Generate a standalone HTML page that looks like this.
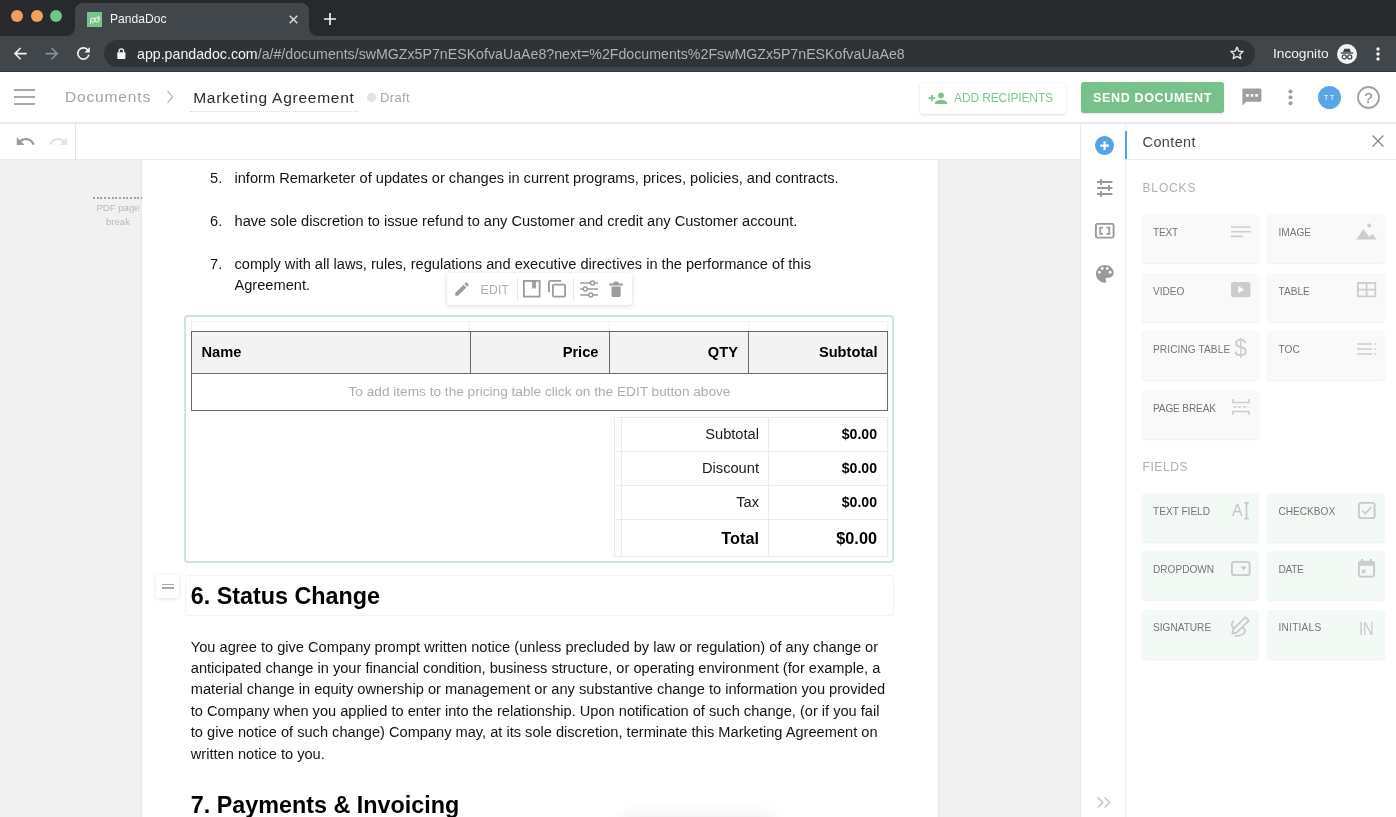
<!DOCTYPE html>
<html>
<head>
<meta charset="utf-8">
<title>PandaDoc</title>
<style>
*{box-sizing:border-box;margin:0;padding:0}
html,body{width:1396px;height:817px;overflow:hidden;background:#fff;font-family:"Liberation Sans",sans-serif;}
#root{position:relative;width:1396px;height:817px;overflow:hidden;background:transparent;will-change:transform;transform:translateZ(0)}
.abs{position:absolute}
svg{display:block;position:absolute;overflow:visible}
.t{position:absolute;white-space:nowrap;line-height:1}
/* ---------- browser chrome ---------- */
#tabstrip{left:0;top:0;width:1396px;height:36px;background:#28292d}
#tab{left:75px;top:3px;width:234px;height:33px;background:#40464a;border-radius:8px 8px 0 0}
#tab:before,#tab:after{content:"";position:absolute;bottom:0;width:8px;height:8px;background:radial-gradient(circle at 0 0,rgba(0,0,0,0) 7.5px,#40464a 8px)}
#tab:before{left:-8px}
#tab:after{right:-8px;transform:scaleX(-1)}
#toolbar{left:0;top:36px;width:1396px;height:36px;background:#40464a}
#toolbarline{left:0;top:70.5px;width:1396px;height:1.5px;background:#33373a}
#omni{left:104px;top:40px;width:1151px;height:27px;border-radius:14px;background:#2f3336}
.tl{width:12px;height:12px;border-radius:50%;top:10px}
/* ---------- app header ---------- */
#apphead{left:0;top:72px;width:1396px;height:51px;background:#fff}
#headline{left:0;top:122.3px;width:1396px;height:1.5px;background:#ebebeb}
#subbar{left:0;top:124px;width:1081px;height:35px;background:#fff}
#subline{left:0;top:159px;width:1081px;height:1px;background:#ececec}
#canvas{left:0;top:160px;width:1081px;height:657px;background:#f2f1f1}
#page{left:141.5px;top:160px;width:796px;height:657px;background:#fff}

/* ---------- document ---------- */
.doc{font-size:14.67px;color:#111;}
.li{position:absolute;white-space:nowrap;line-height:21.45px;font-size:14.61px;color:#141414}
.h{position:absolute;white-space:nowrap;font-size:23.35px;font-weight:700;color:#000;line-height:1}
.th{position:absolute;top:331px;height:43px;border:1px solid #6a6a6a;background:#f3f3f3}
.tht{position:absolute;white-space:nowrap;font-size:14.67px;font-weight:700;color:#000;line-height:1;top:345.4px}
.sl{position:absolute;white-space:nowrap;font-size:14.67px;color:#1a1a1a;line-height:1;text-align:right;width:140px;left:619px}
.sv{position:absolute;white-space:nowrap;font-size:14.1px;font-weight:700;color:#000;line-height:1;text-align:right;width:100px;left:777px}

/* ---------- sidebar ---------- */
#side{left:1081px;top:124px;width:315px;height:693px;background:#fff}
.tile{position:absolute;width:117.3px;height:49.3px;border-radius:4px;background:#f9f9f9;box-shadow:0 1px 2px rgba(0,0,0,0.07)}
.tile.g{background:#f3faf5}
.lb{position:absolute;white-space:nowrap;line-height:1;font-size:10.1px;color:#767676}
.sec{position:absolute;white-space:nowrap;line-height:1;font-size:12px;color:#adb1b4}
</style>
</head>
<body>
<div id="root">

<!-- ===== BROWSER CHROME ===== -->
<div class="abs" id="tabstrip"></div>
<div class="abs" id="tab"></div>
<div class="abs" id="toolbar"></div>
<div class="abs" id="toolbarline"></div>
<div class="abs tl" style="left:11px;background:#f09d5e"></div>
<div class="abs tl" style="left:31px;background:#f0a35c"></div>
<div class="abs tl" style="left:50px;background:#6fc688"></div>
<!-- favicon -->
<div class="abs" style="left:86.800px;top:11.5px;width:15.700px;height:15.700px;background:#77c48c"></div>
<svg style="left:86.800px;top:11.500px" width="15.700" height="15.700" viewBox="0 0 16 16"><g fill="none" stroke="#fff" stroke-width="0.95"><circle cx="5.9" cy="8.3" r="2.2"/><path d="M3.7 8.3V12.2"/><circle cx="10" cy="8" r="2.2"/><path d="M12.2 8V4"/></g></svg>
<div class="t" style="left:110px;top:13px;font-size:12.1px;color:#f1f3f4">PandaDoc</div>
<svg style="left:288.5px;top:15px" width="9" height="9" viewBox="0 0 9 9"><path d="M0.700 0.700L8.300 8.300M8.300 0.700L0.700 8.300" stroke="#dfe1e3" stroke-width="1.400" fill="none"/></svg>
<svg style="left:324px;top:13.4px" width="12" height="12" viewBox="0 0 12 12"><path d="M6 0V12M0 6H12" stroke="#f1f3f4" stroke-width="1.7" fill="none"/></svg>
<!-- nav -->
<svg style="left:14px;top:46.5px" width="13.200" height="13.200" viewBox="0 0 14 14"><path d="M13.5 7H1.5M7 1L1 7L7 13" stroke="#f1f3f4" stroke-width="1.7" fill="none"/></svg>
<svg style="left:45px;top:46.5px" width="13.200" height="13.200" viewBox="0 0 14 14"><path d="M0.5 7H12.5M7 1L13 7L7 13" stroke="#8b9094" stroke-width="1.7" fill="none"/></svg>
<svg style="left:76px;top:46px" width="15" height="15" viewBox="0 0 15 15"><path d="M12 4.2A5.6 5.6 0 1 0 12.9 8.6" stroke="#f1f3f4" stroke-width="1.7" fill="none"/><path d="M13.8 1V6.4H8.4Z" fill="#f1f3f4"/></svg>
<div class="abs" id="omni"></div>
<svg style="left:117.2px;top:48.3px" width="8.700" height="11.300" viewBox="0 0 10 13"><rect x="0.3" y="5" width="9.4" height="7.6" rx="1" fill="#f1f3f4"/><path d="M2.4 5.4V3.6a2.6 2.6 0 0 1 5.2 0V5.4" stroke="#f1f3f4" stroke-width="1.5" fill="none"/></svg>
<div class="t" id="url" style="left:137px;top:46.8px;font-size:14.2px;letter-spacing:0px;color:#aeb2b6"><span style="color:#f4f5f6">app.pandadoc.com</span>/a/#/documents/swMGZx5P7nESKofvaUaAe8?next=%2Fdocuments%2FswMGZx5P7nESKofvaUaAe8</div>
<!-- star -->
<svg style="left:1229px;top:45px" width="16" height="16" viewBox="0 0 24 24"><path d="M12 3.2l2.6 6 6.5.6-4.9 4.3 1.5 6.4L12 17.1l-5.7 3.4 1.5-6.4L2.9 9.8l6.5-.6z" fill="none" stroke="#e6e8ea" stroke-width="2" stroke-linejoin="round"/></svg>
<div class="t" style="left:1273px;top:46.5px;font-size:13.7px;color:#f1f3f4">Incognito</div>
<!-- incognito icon -->
<div class="abs" style="left:1337px;top:43.5px;width:20px;height:20px;border-radius:50%;background:#f1f3f4"></div>
<svg style="left:1337px;top:43.5px" width="20" height="20" viewBox="0 0 21 21"><path d="M6.3 8.6L7.6 4.9h5.8l1.3 3.7z" fill="#40464a"/><rect x="4" y="8.8" width="13" height="1.4" fill="#40464a"/><circle cx="7.6" cy="13.6" r="2.1" fill="none" stroke="#40464a" stroke-width="1.3"/><circle cx="13.4" cy="13.6" r="2.1" fill="none" stroke="#40464a" stroke-width="1.3"/><path d="M9.6 13.3h1.8" stroke="#40464a" stroke-width="1.2"/></svg>
<svg style="left:1376px;top:46.700px" width="4" height="14" viewBox="0 0 4 14"><circle cx="2" cy="2" r="1.700" fill="#f1f3f4"/><circle cx="2" cy="7" r="1.700" fill="#f1f3f4"/><circle cx="2" cy="12" r="1.700" fill="#f1f3f4"/></svg>

<!-- ===== APP HEADER ===== -->
<div class="abs" id="apphead"></div>
<div class="abs" id="headline"></div>
<div class="abs" style="left:13.5px;top:89.3px;width:21.8px;height:1.8px;background:#a9a9a9"></div>
<div class="abs" style="left:13.5px;top:96.2px;width:21.8px;height:1.8px;background:#a9a9a9"></div>
<div class="abs" style="left:13.5px;top:103.1px;width:21.8px;height:1.8px;background:#a9a9a9"></div>
<div class="t" style="left:65px;top:89px;font-size:15.5px;letter-spacing:0.85px;color:#a3a3a3">Documents</div>
<svg style="left:166px;top:90px" width="8" height="14" viewBox="0 0 8 14"><path d="M1.5 1L6.5 7L1.5 13" stroke="#b5b5b5" stroke-width="1.2" fill="none"/></svg>
<div class="t" style="left:193.2px;top:89.5px;font-size:15.5px;letter-spacing:0.74px;color:#2b2b2b">Marketing Agreement</div>
<div class="abs" style="left:190px;top:111px;width:168px;height:0;border-top:1px dotted #dcdcdc"></div>
<div class="abs" style="left:367px;top:93px;width:9px;height:9px;border-radius:50%;background:#e2e2e2"></div>
<div class="t" style="left:380px;top:91px;font-size:13px;letter-spacing:0.37px;color:#a9a9a9">Draft</div>

<!-- header right -->
<div class="abs" style="left:920px;top:83px;width:146px;height:31px;background:#fff;border-radius:3px;box-shadow:0 1px 3px rgba(0,0,0,0.13),0 0 1px rgba(0,0,0,0.08)"></div>
<svg style="left:928px;top:90px" width="20" height="16" viewBox="0 0 20 16"><path d="M0.5 8.2H7.2M3.85 4.9V11.5" stroke="#7cc48e" stroke-width="1.7" fill="none"/><circle cx="13" cy="5.3" r="2.9" fill="#7cc48e"/><path d="M6.8 13.6c0-2.6 4-3.9 6.2-3.9s6.2 1.3 6.2 3.9v0.4H6.8z" fill="#7cc48e"/></svg>
<div class="t" style="left:954px;top:91.6px;font-size:12px;letter-spacing:-0.12px;color:#7fc692">ADD RECIPIENTS</div>
<div class="abs" style="left:1081px;top:82px;width:143px;height:31px;background:#79c18b;border-radius:3px;box-shadow:0 1px 2px rgba(0,0,0,0.12)"></div>
<div class="t" style="left:1093px;top:92.3px;font-size:12.5px;font-weight:700;letter-spacing:0.66px;color:#fff">SEND DOCUMENT</div>
<!-- chat -->
<svg style="left:1242px;top:88px" width="20" height="18" viewBox="0 0 20 18"><path d="M1.8 0.4h16.2a1.4 1.4 0 0 1 1.4 1.4v10.6a1.4 1.4 0 0 1-1.4 1.4H4.2L0.4 17.4V1.8A1.4 1.4 0 0 1 1.8 0.4z" fill="#9e9e9e"/><rect x="3.9" y="6" width="2.7" height="2.7" fill="#fff"/><rect x="8.6" y="6" width="2.7" height="2.7" fill="#fff"/><rect x="13.3" y="6" width="2.7" height="2.7" fill="#fff"/></svg>
<svg style="left:1288px;top:89px" width="5" height="17" viewBox="0 0 5 17"><circle cx="2.5" cy="2.4" r="2" fill="#9e9e9e"/><circle cx="2.5" cy="8.3" r="2" fill="#9e9e9e"/><circle cx="2.5" cy="14.2" r="2" fill="#9e9e9e"/></svg>
<div class="abs" style="left:1318px;top:86px;width:23px;height:23px;border-radius:50%;background:#5aa5e8"></div>
<div class="t" style="left:1324px;top:94px;font-size:7px;letter-spacing:1.6px;color:#fff">TT</div>
<svg style="left:1356.8px;top:85.9px" width="23" height="23" viewBox="0 0 23 23"><circle cx="11.5" cy="11.5" r="10.500" fill="none" stroke="#a2a2a2" stroke-width="1.900"/></svg>
<div class="t" style="left:1364.200px;top:90px;font-size:15px;color:#9e9e9e;-webkit-text-stroke:0.35px #9e9e9e">?</div>

<!-- ===== SUB TOOLBAR ===== -->
<div class="abs" id="subbar"></div>
<div class="abs" id="canvas"></div>
<div class="abs" id="subline"></div>
<div class="abs" style="left:75px;top:124px;width:1px;height:35px;background:#e6e6e6"></div>
<svg style="left:15.25px;top:131.1px" width="21" height="21" viewBox="0 0 24 24"><path fill="#9c9c9c" d="M12.5 8c-2.65 0-5.05.99-6.9 2.6L2 7v9h9l-3.62-3.62c1.39-1.16 3.16-1.88 5.12-1.88 3.54 0 6.55 2.31 7.6 5.5l2.37-.78C21.08 11.03 17.15 8 12.5 8z"/></svg>
<svg style="left:47.65px;top:131.1px" width="21" height="21" viewBox="0 0 24 24"><path fill="#e3e3e3" d="M18.4 10.6C16.55 8.99 14.15 8 11.5 8c-4.65 0-8.58 3.03-9.96 7.22L3.9 16c1.05-3.19 4.05-5.5 7.6-5.5 1.95 0 3.73.72 5.12 1.88L13 16h9V7l-3.6 3.6z"/></svg>

<!-- ===== CANVAS / PAGE ===== -->
<div class="abs" style="left:93px;top:196.800px;width:49px;height:1.8px;background:repeating-linear-gradient(90deg,#a0a0a0 0,#a0a0a0 2px,rgba(0,0,0,0) 2px,rgba(0,0,0,0) 3.7px)"></div>
<div class="t" style="left:68px;top:200.9px;width:100px;text-align:center;font-size:9.7px;line-height:13.7px;letter-spacing:-0.05px;color:#b9b9b9;white-space:normal">PDF page<br>break</div>
<div class="abs" style="left:138.5px;top:160px;width:3px;height:657px;background:linear-gradient(90deg,rgba(0,0,0,0),rgba(0,0,0,0.035))"></div>
<div class="abs" id="page"></div>
<div class="abs" style="left:937.5px;top:160px;width:3px;height:657px;background:linear-gradient(270deg,rgba(0,0,0,0),rgba(0,0,0,0.035))"></div>

<!-- list -->
<div class="li" style="left:210px;top:167.5px">5.</div>
<div class="li" style="left:234.5px;top:167.5px">inform Remarketer of updates or changes in current programs, prices, policies, and contracts.</div>
<div class="li" style="left:210px;top:210.5px">6.</div>
<div class="li" style="left:234.5px;top:210.5px">have sole discretion to issue refund to any Customer and credit any Customer account.</div>
<div class="li" style="left:210px;top:253.6px">7.</div>
<div class="li" style="left:234.5px;top:253.6px">comply with all laws, rules, regulations and executive directives in the performance of this<br>Agreement.</div>

<!-- pricing block -->
<div class="abs" style="left:184px;top:314.5px;width:710px;height:248px;border:2px solid #cfe8d5;border-radius:4px;background:#fff"></div>
<!-- faint top row -->
<div class="abs" style="left:191px;top:321px;width:697px;height:11px;border:1px solid #f0f0f0"></div>
<div class="abs" style="left:469px;top:321px;width:1px;height:11px;background:#f0f0f0"></div>
<div class="abs" style="left:609px;top:321px;width:1px;height:11px;background:#f0f0f0"></div>
<div class="abs" style="left:748px;top:321px;width:1px;height:11px;background:#f0f0f0"></div>
<!-- header cells -->
<div class="th" style="left:191px;width:279.5px"></div>
<div class="th" style="left:469.5px;width:140.3px"></div>
<div class="th" style="left:608.8px;width:140.3px"></div>
<div class="th" style="left:748.1px;width:140.1px"></div>
<div class="tht" style="left:201.5px">Name</div>
<div class="tht" style="left:498.5px;width:100px;text-align:right">Price</div>
<div class="tht" style="left:638px;width:100px;text-align:right">QTY</div>
<div class="tht" style="left:777.5px;width:100px;text-align:right">Subtotal</div>
<!-- body row -->
<div class="abs" style="left:191px;top:373px;width:697.2px;height:38px;border:1px solid #6a6a6a;background:#fff"></div>
<div class="t" style="left:191px;width:697px;top:385px;text-align:center;font-size:13.65px;color:#adadad">To add items to the pricing table click on the EDIT button above</div>
<!-- summary -->
<div class="abs" style="left:614px;top:417px;width:274px;height:140px;border:1px solid #ebebeb"></div>
<div class="abs" style="left:621px;top:417px;width:1px;height:140px;background:#ebebeb"></div>
<div class="abs" style="left:768px;top:417px;width:1px;height:140px;background:#ebebeb"></div>
<div class="abs" style="left:614px;top:451px;width:274px;height:1px;background:#ebebeb"></div>
<div class="abs" style="left:614px;top:485px;width:274px;height:1px;background:#ebebeb"></div>
<div class="abs" style="left:614px;top:519px;width:274px;height:1px;background:#ebebeb"></div>
<div class="sl" style="top:427px">Subtotal</div>
<div class="sv" style="top:427px">$0.00</div>
<div class="sl" style="top:461px">Discount</div>
<div class="sv" style="top:461px">$0.00</div>
<div class="sl" style="top:495px">Tax</div>
<div class="sv" style="top:495px">$0.00</div>
<div class="sl" style="top:529.5px;font-size:16.3px;font-weight:700;color:#000">Total</div>
<div class="sv" style="top:529.5px;font-size:16.3px">$0.00</div>

<!-- floating toolbar -->
<div class="abs" style="left:447px;top:272.5px;width:185px;height:32.5px;background:#fff;border-radius:3px;box-shadow:0 1px 5px rgba(0,0,0,0.14),0 0 1px rgba(0,0,0,0.10)"></div>
<svg style="left:453.3px;top:280.3px" width="18" height="18" viewBox="0 0 24 24"><path fill="#9c9c9c" d="M3 17.25V21h3.75L17.81 9.94l-3.75-3.75L3 17.25zM20.71 7.04c.39-.39.39-1.02 0-1.41l-2.34-2.34c-.39-.39-1.02-.39-1.41 0l-1.83 1.83 3.75 3.75 1.83-1.83z"/></svg>
<div class="t" style="left:480.5px;top:283.5px;font-size:12.3px;letter-spacing:0.2px;color:#b0b0b0">EDIT</div>
<div class="abs" style="left:517px;top:278px;width:1px;height:22px;background:#e6e6e6"></div>
<svg style="left:523px;top:279.800px" width="17.500" height="17.500" viewBox="0 0 17.500 17.500"><rect x="0.900" y="0.900" width="15.700" height="15.700" fill="none" stroke="#9c9c9c" stroke-width="1.800"/><path d="M9.100 0.900h3.800v8.200l-1.900-1.700-1.900 1.700z" fill="#9c9c9c"/></svg>
<svg style="left:548px;top:279.700px" width="18" height="17.500" viewBox="0 0 18 17.500"><path d="M13.200 0.900H2.400a1.500 1.500 0 0 0-1.500 1.500v9.800" fill="none" stroke="#9c9c9c" stroke-width="1.8"/><rect x="4.9" y="4.6" width="12.2" height="12" rx="1.3" fill="none" stroke="#9c9c9c" stroke-width="1.8"/></svg>
<div class="abs" style="left:573px;top:278px;width:1px;height:22px;background:#e6e6e6"></div>
<svg style="left:580px;top:280.4px" width="18" height="18" viewBox="0 0 18 18"><g fill="none" stroke="#9c9c9c" stroke-width="1.5"><path d="M0.2 3H10.3M14.7 3H18"/><circle cx="12.5" cy="3" r="2"/><path d="M0.2 9H3.1M7.5 9H18"/><circle cx="5.3" cy="9" r="2"/><path d="M0.2 15H8.6M13 15H18"/><circle cx="10.8" cy="15" r="2"/></g></svg>
<svg style="left:609px;top:281px" width="14" height="16" viewBox="0 0 14 16"><path fill="#9c9c9c" d="M4.2 2.700L5.2 0.600H8.9L9.900 2.700ZM0.400 2.600H13.700V4.400H0.400ZM2.500 5.600H11.700V14.500a1.400 1.400 0 0 1-1.400 1.400H3.900a1.400 1.400 0 0 1-1.400-1.400Z"/></svg>

<!-- heading 6 -->
<div class="abs" style="left:184.5px;top:575px;width:709px;height:41px;border:1px solid #f3f3f3;border-radius:3px"></div>
<div class="abs" style="left:156px;top:575.4px;width:23px;height:22.5px;background:#fff;border-radius:3px;box-shadow:0 1px 4px rgba(0,0,0,0.12)"></div>
<div class="abs" style="left:161.5px;top:583.5px;width:12px;height:1.6px;background:#a9a9a9"></div>
<div class="abs" style="left:161.5px;top:587.3px;width:12px;height:1.6px;background:#a9a9a9"></div>
<div class="h" style="left:190.7px;top:584.9px">6. Status Change</div>
<div class="li" style="left:190.8px;top:636.5px">You agree to give Company prompt written notice (unless precluded by law or regulation) of any change or<br>anticipated change in your financial condition, business structure, or operating environment (for example, a<br>material change in equity ownership or management or any substantive change to information you provided<br>to Company when you applied to enter into the relationship. Upon notification of such change, (or if you fail<br>to give notice of such change) Company may, at its sole discretion, terminate this Marketing Agreement on<br>written notice to you.</div>
<div class="h" style="left:190.7px;top:794.0px">7. Payments &amp; Invoicing</div>
<!-- bottom popup shadow -->
<div class="abs" style="left:622px;top:819px;width:152px;height:30px;border-radius:4px;background:#fff;box-shadow:0 -2px 18px rgba(0,0,0,0.085)"></div>

<!--DOC-->

<div class="abs" id="side"></div>
<div class="abs" style="left:1080px;top:124px;width:1px;height:693px;background:#e9e9e9"></div>
<div class="abs" style="left:1123px;top:124px;width:4px;height:693px;background:linear-gradient(90deg,rgba(243,242,242,0),#f3f2f2)"></div>
<div class="abs" style="left:1126px;top:159px;width:270px;height:1px;background:#eeeeee"></div>
<div class="abs" style="left:1124.700px;top:131px;width:2.200px;height:28px;background:#56a2e8"></div>
<!-- rail icons -->
<div class="abs" style="left:1094.6px;top:135.6px;width:19.2px;height:19.2px;border-radius:50%;background:#56a2e8"></div>
<svg style="left:1094.6px;top:135.6px" width="19.2" height="19.2" viewBox="0 0 19.2 19.2"><path d="M9.6 5.3V13.9M5.3 9.6H13.900" stroke="#fff" stroke-width="2.2" fill="none"/></svg>
<svg style="left:1096.500px;top:178.500px" width="16" height="18" viewBox="0 0 16 18"><g fill="none" stroke="#999999" stroke-width="1.900"><path d="M0.200 3H15.400M4 0V6"/><path d="M0.200 9H15.400M12 6V12"/><path d="M0.200 15H15.400M4 12V18"/></g></svg>
<svg style="left:1094.5px;top:223px" width="19.5" height="15.5" viewBox="0 0 19.5 15.5"><rect x="0.9" y="0.9" width="17.7" height="13.7" rx="1.5" fill="none" stroke="#9b9b9b" stroke-width="1.9"/><path d="M8 4.700H5.200V10.800H8M11.500 4.700H14.300V10.800H11.500" fill="none" stroke="#9b9b9b" stroke-width="1.800"/></svg>
<svg style="left:1092.650px;top:261.950px" width="23.600" height="23.600" viewBox="0 0 24 24"><path fill="#9a9a9a" d="M12 3c-4.97 0-9 4.03-9 9s4.03 9 9 9c.83 0 1.5-.67 1.5-1.5 0-.39-.15-.74-.39-1.01-.23-.26-.38-.61-.38-.99 0-.83.67-1.5 1.5-1.5H16c2.76 0 5-2.24 5-5 0-4.42-4.03-8-9-8zm-5.5 9c-.83 0-1.5-.67-1.5-1.5S5.670 9 6.500 9 8 9.670 8 10.500 7.330 12 6.500 12zm3-4C8.670 8 8 7.330 8 6.500S8.670 5 9.500 5s1.500.67 1.500 1.500S10.330 8 9.500 8zm5 0c-.83 0-1.500-.67-1.500-1.500S13.670 5 14.500 5s1.500.67 1.500 1.500S15.330 8 14.500 8zm3 4c-.83 0-1.500-.67-1.500-1.500S16.670 9 17.500 9s1.500.67 1.500 1.500-.67 1.500-1.500 1.500z"/></svg>
<svg style="left:1097px;top:797px" width="14" height="11" viewBox="0 0 14 11"><path d="M0.8 0.6L5.8 5.5L0.8 10.4M7.6 0.6L12.600 5.5L7.600 10.400" fill="none" stroke="#c2c2c2" stroke-width="1.400"/></svg>
<!-- panel header -->
<div class="t" style="left:1142.6px;top:134.900px;font-size:14.400px;letter-spacing:0.42px;color:#41464b">Content</div>
<svg style="left:1372px;top:135px" width="12" height="12" viewBox="0 0 12 12"><path d="M0.600 0.600L11.400 11.400M11.400 0.600L0.600 11.400" stroke="#8c8c8c" stroke-width="1.4" fill="none"/></svg>
<div class="sec" style="left:1142.5px;top:182px;letter-spacing:0.85px">BLOCKS</div>
<div class="sec" style="left:1142.5px;top:460.5px;letter-spacing:0.6px">FIELDS</div>
<!-- block tiles -->
<div class="tile" style="left:1141.6px;top:214px"></div>
<div class="tile" style="left:1267.3px;top:214px"></div>
<div class="tile" style="left:1141.6px;top:272.6px"></div>
<div class="tile" style="left:1267.3px;top:272.6px"></div>
<div class="tile" style="left:1141.6px;top:331.100px"></div>
<div class="tile" style="left:1267.3px;top:331.100px"></div>
<div class="tile" style="left:1141.6px;top:389.600px"></div>
<div class="lb" style="left:1153px;top:227.9px;letter-spacing:-0.2px">TEXT</div>
<div class="lb" style="left:1278.5px;top:227.9px">IMAGE</div>
<div class="lb" style="left:1153px;top:286.5px">VIDEO</div>
<div class="lb" style="left:1278.5px;top:286.5px">TABLE</div>
<div class="lb" style="left:1153px;top:345.0px;letter-spacing:0.1px">PRICING TABLE</div>
<div class="lb" style="left:1278.5px;top:345.0px;letter-spacing:0.1px">TOC</div>
<div class="lb" style="left:1153px;top:403.5px;letter-spacing:-0.15px">PAGE BREAK</div>
<!-- block icons -->
<svg style="left:1231px;top:226px" width="20" height="12" viewBox="0 0 20 12"><path d="M0 1H19.500M0 5.700H19.500M0 10.400H11.700" stroke="#cdcdcd" stroke-width="1.6" fill="none"/></svg>
<svg style="left:1356px;top:223px" width="21" height="17" viewBox="0 0 21 17"><path d="M0.200 16.500L7.500 5.900L13.200 13.900L16.300 11L20.900 16.500z" fill="#cdcdcd"/><circle cx="13.200" cy="2.500" r="1.900" fill="#cdcdcd"/></svg>
<svg style="left:1231px;top:282.3px" width="19.500" height="15.300" viewBox="0 0 19.500 15.300"><rect width="19.500" height="15.300" rx="2.500" fill="#cdcdcd"/><path d="M7.400 4.100V11.200L13.200 7.650z" fill="#fff"/></svg>
<svg style="left:1356.700px;top:282.300px" width="19.200" height="15.300" viewBox="0 0 19.200 15.300"><g fill="none" stroke="#cdcdcd" stroke-width="1.800"><rect x="0.900" y="0.900" width="17.400" height="13.500"/><path d="M9.600 0.750V14.550M0.750 7.650H18.450"/></g></svg>
<div class="t" style="left:1234.300px;top:337.200px;font-size:23px;color:#cdcdcd;transform:scaleX(1.0);transform-origin:0 0">$</div>
<svg style="left:1356.700px;top:342.500px" width="20" height="12" viewBox="0 0 20 12"><path d="M0 1H15M0 6H15M0 11H15" stroke="#cdcdcd" stroke-width="1.600" fill="none"/><path d="M17.500 1H19.200M17.500 6H19.200M17.500 11H19.200" stroke="#cdcdcd" stroke-width="1.600" fill="none"/></svg>
<svg style="left:1232px;top:399px" width="17.600" height="16" viewBox="0 0 17.600 16"><g fill="none" stroke="#cdcdcd" stroke-width="1.500"><path d="M0.750 0V3.600H16.850V0"/><path d="M0.750 16V12.400H16.850V16"/><path d="M1.200 8H16.400" stroke-dasharray="3.200 1.600"/></g></svg>
<!-- field tiles -->
<div class="tile g" style="left:1141.600px;top:493px"></div>
<div class="tile g" style="left:1267.300px;top:493px"></div>
<div class="tile g" style="left:1141.600px;top:551.200px"></div>
<div class="tile g" style="left:1267.300px;top:551.200px"></div>
<div class="tile g" style="left:1141.600px;top:609.500px"></div>
<div class="tile g" style="left:1267.300px;top:609.500px"></div>
<div class="lb" style="left:1153px;top:506.8px">TEXT FIELD</div>
<div class="lb" style="left:1278.500px;top:506.8px">CHECKBOX</div>
<div class="lb" style="left:1153px;top:565.1px">DROPDOWN</div>
<div class="lb" style="left:1278.500px;top:565.1px;letter-spacing:-0.3px">DATE</div>
<div class="lb" style="left:1153px;top:623.4px">SIGNATURE</div>
<div class="lb" style="left:1278.500px;top:623.4px;letter-spacing:0.25px">INITIALS</div>
<!-- field icons -->
<div class="t" style="left:1232px;top:502.900px;font-size:16.600px;color:#c6c6c6;transform:scaleX(0.96);transform-origin:0 0">A</div>
<svg style="left:1244.200px;top:501.600px" width="5" height="17.500" viewBox="0 0 5 17.500"><path d="M2.500 0.800V16.700M0.300 0.800H4.700M0.300 16.700H4.700" stroke="#c9c9c9" stroke-width="1.700" fill="none"/></svg>
<svg style="left:1357.500px;top:501.700px" width="17.500" height="17" viewBox="0 0 17.500 17"><rect x="0.900" y="0.900" width="15.700" height="15.200" rx="2.200" fill="none" stroke="#c9c9c9" stroke-width="1.900"/><path d="M4.300 8.700L7.300 11.600L13.200 5.200" fill="none" stroke="#c9c9c9" stroke-width="1.700"/></svg>
<svg style="left:1231px;top:561.300px" width="19.500" height="15" viewBox="0 0 19.500 15"><rect x="0.900" y="0.900" width="17.700" height="13.200" rx="2" fill="none" stroke="#c9c9c9" stroke-width="1.900"/><path d="M9.800 5.600H15.400L12.600 9.300z" fill="#c4c4c4"/></svg>
<svg style="left:1358px;top:559px" width="17" height="18.500" viewBox="0 0 17 18.500"><path d="M4 0V3M13 0V3" stroke="#c9c9c9" stroke-width="1.900"/><rect x="0.900" y="2.700" width="15.200" height="14.900" rx="2" fill="none" stroke="#c9c9c9" stroke-width="1.900"/><rect x="0.800" y="2.600" width="15.400" height="4.200" fill="#cdcdcd"/><rect x="3.800" y="10.600" width="3.600" height="3.600" fill="#cdcdcd"/></svg>
<svg style="left:1230px;top:616px" width="20" height="21" viewBox="0 0 20 21"><g fill="none" stroke="#c9c9c9" stroke-width="1.700" stroke-linejoin="round" stroke-linecap="round"><path d="M15.400 1.200L18.800 4.600L6.700 16.700L2.300 17.600L3.200 13.400z"/><path d="M3.300 5.400C1.200 7.200 1.200 10 3.600 12"/><path d="M12.600 11.600C16 13.500 16 17.300 11.200 19C9.200 19.700 7.200 19.900 5.400 19.900"/></g></svg>
<div class="t" style="left:1359px;top:618.500px;font-size:19px;letter-spacing:-0.5px;color:#cdcdcd;transform:scaleX(0.80);transform-origin:0 0">IN</div>


</div>
</body>
</html>
